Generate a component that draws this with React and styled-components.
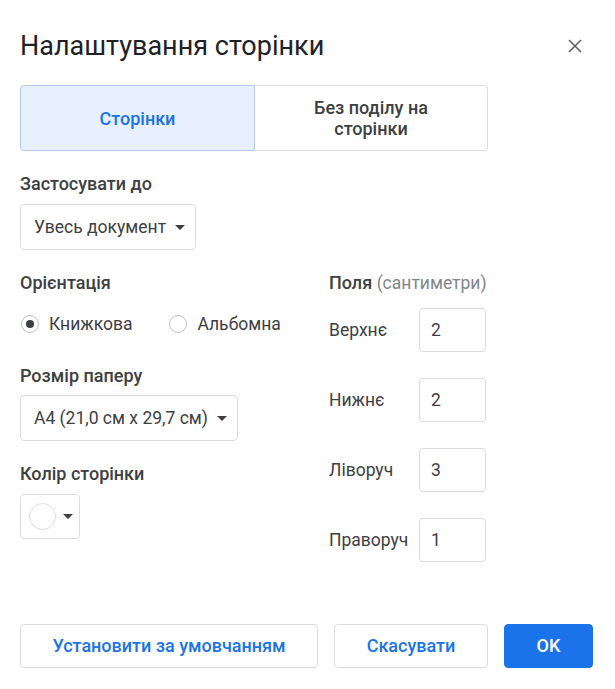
import React from "react";
import styled, { createGlobalStyle } from "styled-components";

const GlobalStyle = createGlobalStyle`
  body {
    margin: 0;
    background: #fff;
    font-family: Roboto, "Liberation Sans", Arial, sans-serif;
  }
`;

const Dialog = styled.div`
  width: 615px;
  height: 689px;
  box-sizing: border-box;
  padding: 28px 20px 0 20px;
  background: #fff;
`;

const Header = styled.div`
  display: flex;
  align-items: center;
  justify-content: space-between;
  height: 36px;
`;

const Title = styled.h1`
  margin: 0;
  font: 400 27px/36px Roboto, sans-serif;
  color: #202124;
`;

const CloseButton = styled.button`
  border: none;
  background: none;
  padding: 0;
  margin-right: 13px;
  display: flex;
  cursor: pointer;
`;

const Tabs = styled.div`
  display: grid;
  grid-template-columns: 235px 233px;
  width: 468px;
  height: 66px;
  margin-top: 21px;
`;

const Tab = styled.div`
  display: flex;
  align-items: center;
  justify-content: center;
  text-align: center;
  font: 500 18px/21px Roboto, sans-serif;
  color: ${(p) => (p.$active ? "#1a73e8" : "#3c4043")};
  background: ${(p) => (p.$active ? "#e8f0fe" : "#fff")};
  border: 1px solid ${(p) => (p.$active ? "#b3cdf6" : "#dadce0")};
  border-left-width: ${(p) => (p.$active ? "1px" : "0")};
  border-radius: ${(p) => (p.$active ? "4px 0 0 4px" : "0 4px 4px 0")};
  padding: 0 16px;
`;

const Heading = styled.div`
  font: 500 18px/20px Roboto, sans-serif;
  color: #3c4043;
  margin-top: ${(p) => p.$top || 0}px;
`;

const Muted = styled.span`
  font-weight: 400;
  font-size: 17.5px;
  color: #80868b;
`;

const Select = styled.div`
  display: inline-flex;
  align-items: center;
  gap: 9px;
  box-sizing: border-box;
  height: 46px;
  margin-top: ${(p) => p.$top}px;
  padding: 0 10px 0 13px;
  border: 1px solid #dadce0;
  border-radius: 4px;
  font: 400 17.5px/20px Roboto, sans-serif;
  color: #3c4043;
`;

const Caret = styled.span`
  width: 0;
  height: 0;
  border-left: 5px solid transparent;
  border-right: 5px solid transparent;
  border-top: 5px solid #3c4043;
`;

const Columns = styled.div`
  display: grid;
  grid-template-columns: 309px 1fr;
  margin-top: 23px;
`;

const Column = styled.div`
  display: flex;
  flex-direction: column;
  align-items: flex-start;
`;

const RadioRow = styled.div`
  display: flex;
  align-items: center;
  gap: 37px;
  height: 24px;
  margin-top: 19px;
  margin-left: 1px;
`;

const RadioOption = styled.label`
  display: flex;
  align-items: center;
  gap: 10px;
  font: 400 17.5px/20px Roboto, sans-serif;
  color: #3c4043;
`;

const RadioCircle = styled.span`
  box-sizing: border-box;
  width: 18px;
  height: 18px;
  border-radius: 50%;
  border: 1px solid #bdc1c6;
  display: flex;
  align-items: center;
  justify-content: center;

  &::after {
    content: "";
    width: 8px;
    height: 8px;
    border-radius: 50%;
    background: ${(p) => (p.$checked ? "#3c4043" : "transparent")};
  }
`;

const ColorButton = styled.div`
  display: flex;
  align-items: center;
  gap: 7px;
  box-sizing: border-box;
  width: 60px;
  height: 45px;
  margin-top: 10px;
  padding-left: 8px;
  border: 1px solid #dadce0;
  border-radius: 4px;
`;

const Swatch = styled.span`
  box-sizing: border-box;
  width: 27px;
  height: 27px;
  border-radius: 50%;
  border: 1px solid #dadce0;
  background: #fff;
`;

const MarginGrid = styled.div`
  display: grid;
  grid-template-columns: 90px 67px;
  row-gap: 26px;
  align-items: center;
  margin-top: 15px;
`;

const MarginLabel = styled.span`
  font: 400 17.5px/20px Roboto, sans-serif;
  color: #3c4043;
`;

const MarginInput = styled.div`
  box-sizing: border-box;
  height: 44px;
  padding: 0 11px;
  display: flex;
  align-items: center;
  border: 1px solid #dadce0;
  border-radius: 4px;
  font: 400 17.5px/20px Roboto, sans-serif;
  color: #3c4043;
`;

const Footer = styled.div`
  display: flex;
  gap: 16px;
  margin-top: 62px;
`;

const Button = styled.button`
  box-sizing: border-box;
  height: 44px;
  width: ${(p) => p.$width}px;
  border: 1px solid ${(p) => (p.$primary ? "#1a73e8" : "#dadce0")};
  border-radius: 4px;
  background: ${(p) => (p.$primary ? "#1a73e8" : "#fff")};
  color: ${(p) => (p.$primary ? "#fff" : "#1a73e8")};
  font: 500 18px/20px Roboto, sans-serif;
  padding: 0;
  cursor: pointer;
`;

const margins = [
  ["Верхнє", "2"],
  ["Нижнє", "2"],
  ["Ліворуч", "3"],
  ["Праворуч", "1"],
];

const App = () => {
  return (
    <>
      <GlobalStyle />
      <Dialog>
        <Header>
          <Title>Налаштування сторінки</Title>
          <CloseButton aria-label="Закрити">
            <svg width="14" height="14" viewBox="0 0 14 14">
              <path
                d="M1 1L13 13M13 1L1 13"
                stroke="#5f6368"
                strokeWidth="1.6"
                fill="none"
              />
            </svg>
          </CloseButton>
        </Header>

        <Tabs>
          <Tab $active>Сторінки</Tab>
          <Tab>
            Без поділу на
            <br />
            сторінки
          </Tab>
        </Tabs>

        <Heading $top={23}>Застосувати до</Heading>
        <Select $top={10}>
          Увесь документ
          <Caret />
        </Select>

        <Columns>
          <Column>
            <Heading>Орієнтація</Heading>
            <RadioRow>
              <RadioOption>
                <RadioCircle $checked />
                Книжкова
              </RadioOption>
              <RadioOption>
                <RadioCircle />
                Альбомна
              </RadioOption>
            </RadioRow>

            <Heading $top={30}>Розмір паперу</Heading>
            <Select $top={9}>
              A4 (21,0 см x 29,7 см)
              <Caret />
            </Select>

            <Heading $top={23}>Колір сторінки</Heading>
            <ColorButton>
              <Swatch />
              <Caret />
            </ColorButton>
          </Column>

          <Column>
            <Heading>
              Поля <Muted>(сантиметри)</Muted>
            </Heading>
            <MarginGrid>
              {margins.map(([label, value]) => (
                <React.Fragment key={label}>
                  <MarginLabel>{label}</MarginLabel>
                  <MarginInput>{value}</MarginInput>
                </React.Fragment>
              ))}
            </MarginGrid>
          </Column>
        </Columns>

        <Footer>
          <Button $width={298}>Установити за умовчанням</Button>
          <Button $width={154}>Скасувати</Button>
          <Button $width={89} $primary>
            OK
          </Button>
        </Footer>
      </Dialog>
    </>
  );
};

export default App;
